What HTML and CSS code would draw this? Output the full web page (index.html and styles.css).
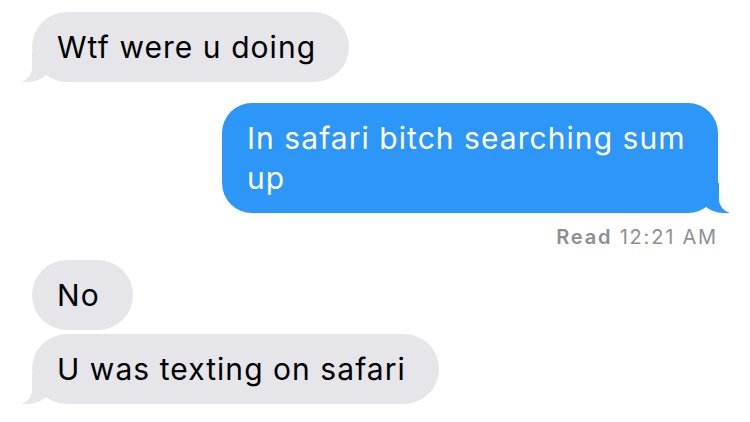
FILE: index.html
```html
<!DOCTYPE html>
<html lang="en">
<head>
<meta charset="utf-8">
<title>Messages</title>
<link rel="stylesheet" href="styles.css">
</head>
<body>
<div class="chat">
  <div class="bubble in first">Wtf were u doing</div>
  <div class="bubble out">In safari bitch searching sum up</div>
  <div class="receipt"><b>Read</b> 12:21 AM</div>
  <div class="bubble in no-tail">No</div>
  <div class="bubble in next">U was texting on safari</div>
</div>
</body>
</html>
```
FILE: styles.css
```css
html {
  background: #ffffff;
}

body {
  margin: 0;
  padding: 0;
}

.chat {
  display: flex;
  flex-direction: column;
  padding: 12px 32px 0 32px;
  font-family: Inter, "Liberation Sans", sans-serif;
}

.bubble {
  position: relative;
  box-sizing: border-box;
  font-size: 30px;
  line-height: 40px;
  padding: 15px 33px 15px 25px;
  border-radius: 35px;
  letter-spacing: 1.05px;
}

.bubble.in {
  align-self: flex-start;
  background: #e5e5ea;
  color: #000000;
}

.bubble.out {
  align-self: flex-end;
  width: 496px;
  margin-top: 21px;
  padding: 15px 22px 15px 25px;
  background: #2c96f9;
  color: #ffffff;
  border-radius: 30px;
}

.bubble.in::before,
.bubble.out::before {
  content: "";
  position: absolute;
  z-index: -1;
  bottom: 0;
  width: 32px;
  height: 30px;
}

.bubble.in::after,
.bubble.out::after {
  content: "";
  position: absolute;
  z-index: -1;
  bottom: 0;
  width: 16px;
  height: 32px;
  background: #ffffff;
}

.bubble.in::before {
  left: -10px;
  background: #e5e5ea;
  border-bottom-right-radius: 26px;
}

.bubble.in::after {
  left: -16px;
  border-bottom-right-radius: 14px;
}

.bubble.out::before {
  right: -11px;
  background: #2c96f9;
  border-bottom-left-radius: 26px;
}

.bubble.out::after {
  right: -17px;
  border-bottom-left-radius: 14px;
}

.bubble.no-tail::before,
.bubble.no-tail::after {
  display: none;
}

.bubble.next {
  margin-top: 4px;
}

.receipt {
  align-self: flex-end;
  margin-top: 12px;
  margin-bottom: 11px;
  font-size: 20px;
  line-height: 24px;
  letter-spacing: 1.8px;
  color: #8e8e93;
}

.receipt b {
  font-weight: 600;
}
```
